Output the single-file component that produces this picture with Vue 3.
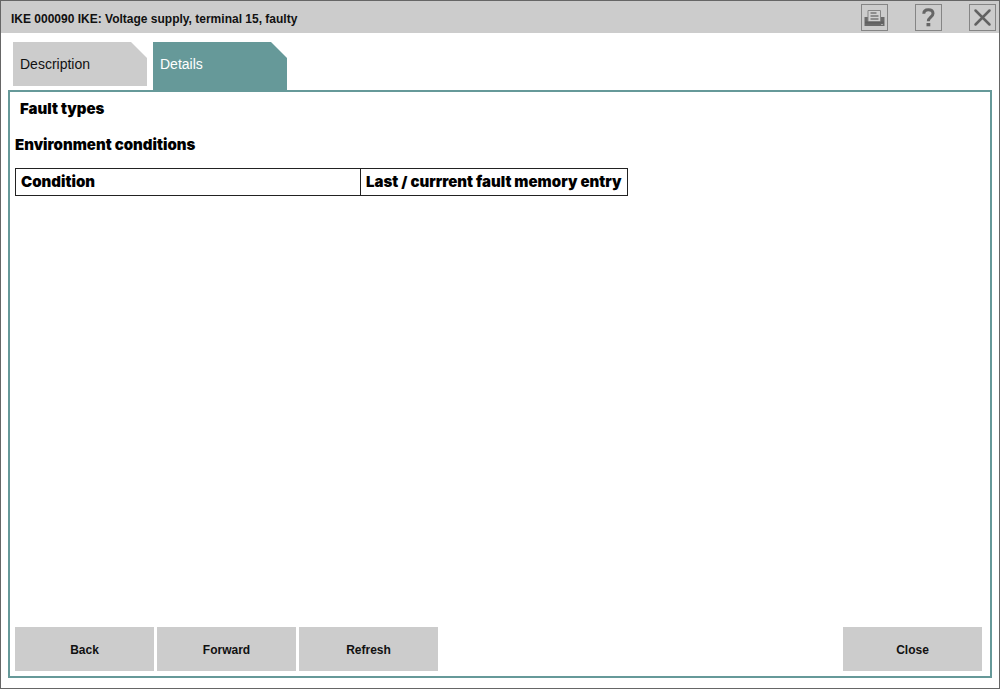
<script setup>
import { ref } from 'vue'

const tabs = ['Description', 'Details']
const active = ref('Details')
const actions = ['Back', 'Forward', 'Refresh']
const columns = ['Condition', 'Last / currrent fault memory entry']
</script>

<template>
  <div class="window">
    <header class="titlebar">
      <h1>IKE 000090 IKE: Voltage supply, terminal 15, faulty</h1>
      <div class="tools">
        <button type="button" aria-label="Print">
          <svg viewBox="0 0 27 27" aria-hidden="true">
            <path d="M3.500 13h3.500v4h13v-4h3.500v9h-20z" fill="#6a6a6a" />
            <path d="M7 17.500V6.500h12.500v11" fill="#d0d0d0" stroke="#858585" />
            <path d="M9.500 9h6M9.500 12h8M9.500 15h8" stroke="#777" stroke-width="1.500" />
            <path d="M4 18.500h19" stroke="#606060" stroke-width="2" />
            <path d="M20 20.500h2" stroke="#aaa" />
          </svg>
        </button>
        <button type="button" aria-label="Help">
          <svg viewBox="0 0 27 27" aria-hidden="true">
            <path d="M8.800 9.800C8.800 6.800 10.700 5.800 13.300 5.800s4.700 1.300 4.700 3.700c0 3.600-4.700 3.800-4.700 7.800" fill="none" stroke="#666" stroke-width="3" />
            <path d="M11.500 19h3.800v3.300h-3.800z" fill="#666" />
          </svg>
        </button>
        <button type="button" aria-label="Close window">
          <svg viewBox="0 0 27 27" aria-hidden="true">
            <path d="M6.500 6.500l14 14M20.500 6.500l-14 14" fill="none" stroke="#626262" stroke-width="2.500" stroke-linecap="round" />
          </svg>
        </button>
      </div>
    </header>

    <nav class="tabs" role="tablist">
      <button
        v-for="tab in tabs"
        :key="tab"
        type="button"
        role="tab"
        :aria-selected="tab === active"
        :class="{ active: tab === active }"
        @click="active = tab"
      >{{ tab }}</button>
    </nav>

    <main class="panel">
      <h2 class="types">Fault types</h2>
      <h2>Environment conditions</h2>
      <table>
        <thead>
          <tr>
            <th v-for="column in columns" :key="column" scope="col">{{ column }}</th>
          </tr>
        </thead>
      </table>
      <footer class="actions">
        <button v-for="action in actions" :key="action" type="button">{{ action }}</button>
        <button type="button" class="close">Close</button>
      </footer>
    </main>
  </div>
</template>

<style>
body {
  margin: 0;
  background: #fff;
}
</style>

<style scoped>
.window {
  box-sizing: border-box;
  min-height: 100vh;
  display: flex;
  flex-direction: column;
  border: 1px solid #666;
  background: #fff;
  color: #000;
  font-family: "Liberation Sans", Arial, sans-serif;
}

button {
  margin: 0;
  border: 0;
  padding: 0;
  background: #ccc;
  color: #111;
  font-family: inherit;
}

.titlebar {
  display: flex;
  align-items: center;
  justify-content: space-between;
  height: 32px;
  padding: 0 3px 0 10px;
  background: #ccc;
}

h1 {
  margin: 0;
  padding-top: 4px;
  font-size: 12px;
  line-height: 16px;
  color: #111;
}

.tools {
  display: flex;
  gap: 27px;
}

.tools button {
  box-sizing: border-box;
  width: 27px;
  height: 27px;
  border: 1px solid #858585;
}

.tools svg {
  display: block;
  width: 27px;
  height: 27px;
  margin: -1px;
}

.tabs {
  display: flex;
  align-items: flex-start;
  gap: 6px;
  height: 48px;
  padding: 9px 12px 0;
}

.tabs button {
  width: 134px;
  height: 44px;
  padding: 0 7px;
  text-align: left;
  font-size: 14px;
  line-height: 44px;
  clip-path: polygon(0 0, 118px 0, 100% 16px, 100% 100%, 0 100%);
}

.tabs .active {
  height: 48px;
  padding-bottom: 4px;
  background: #669999;
  color: #fff;
}

.panel {
  flex: 1;
  display: flex;
  flex-direction: column;
  align-items: flex-start;
  margin: 0 7px 10px;
  padding: 7px 8px 5px 5px;
  border: 2px solid #669999;
}

h2,
th {
  font-family: Inter, "Liberation Sans", sans-serif;
  font-size: 15px;
  font-weight: 900;
  line-height: 20px;
}

h2 {
  margin: 0 0 13px;
}

.types {
  margin: 0 0 16px 5px;
}

table {
  border-collapse: collapse;
}

th {
  border: 1px solid #222;
  padding: 3px 5px;
  text-align: left;
  white-space: nowrap;
}

th:first-child {
  width: 334px;
}

.actions {
  align-self: stretch;
  display: flex;
  gap: 3px;
  margin-top: auto;
}

.actions button {
  width: 139px;
  height: 44px;
  padding-top: 1px;
  font-size: 12px;
  font-weight: bold;
}

.actions .close {
  margin-left: auto;
}
</style>
